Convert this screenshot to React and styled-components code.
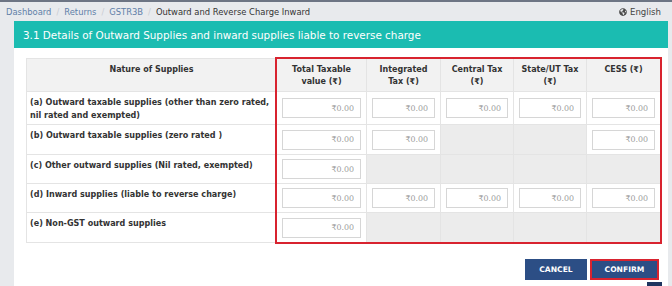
import React from "react";
import styled, { createGlobalStyle } from "styled-components";
import { FaGlobeAmericas } from "react-icons/fa";

const GlobalStyle = createGlobalStyle`
  body {
    margin: 0;
    background: #e8eaed;
    font-family: "DejaVu Sans", Verdana, sans-serif;
    color: #333;
    overflow: hidden;
  }
`;

const TopBar = styled.div`
  border-top: 2px solid #6d7584;
  height: 19px;
  display: flex;
  align-items: center;
  justify-content: space-between;
  padding: 0 11px 0 6px;
  font-size: 8.4px;
`;

const Crumbs = styled.div`
  display: flex;
  align-items: center;
`;

const Crumb = styled.span`
  color: ${(p) => (p.$current ? "#333" : "#5f7fa8")};
`;

const Sep = styled.span`
  color: #c9ccd2;
  margin: 0 5px;
`;

const Lang = styled.div`
  display: flex;
  align-items: center;
  gap: 3px;
  color: #444;
  font-size: 8.6px;
  svg {
    width: 8px;
    height: 8px;
    color: #4a4a4a;
  }
`;

const Main = styled.div`
  padding: 0 4px 0 14px;
`;

const TitleBar = styled.div`
  background: #1bbcb1;
  color: #fff;
  height: 27px;
  line-height: 28px;
  padding-left: 9px;
  font-size: 10.4px;
`;

const Panel = styled.div`
  background: #fff;
  padding: 10px 8px 30px 12px;
`;

const Table = styled.div`
  display: grid;
  grid-template-columns: 250px 90px 74px 73px 73px 74px;
  width: 634px;
  border-top: 1px solid #e4e4e4;
  border-left: 1px solid #e4e4e4;
  box-sizing: border-box;
`;

const Cell = styled.div`
  grid-row: ${(p) => p.$row};
  grid-column: ${(p) => p.$col};
  border-right: 1px solid #e4e4e4;
  border-bottom: 1px solid #e4e4e4;
  box-sizing: border-box;
`;

const HeadCell = styled(Cell)`
  background: #f2f2f2;
  padding: 5px 6px 4px;
  height: 33px;
  font-size: 8px;
  font-weight: bold;
  line-height: 12px;
  text-align: center;
  color: #333;
`;

const TextCell = styled(Cell)`
  padding: 4px 4px 3px 3px;
  font-size: 8.05px;
  font-weight: bold;
  line-height: 13px;
  color: #333;
  height: ${(p) => p.$h}px;
`;

const InputCell = styled(Cell)`
  background: ${(p) => (p.$off ? "#ececec" : "#fff")};
  padding: 0 5px;
  display: flex;
  align-items: center;
  height: ${(p) => p.$h}px;
`;

const Amount = styled.input`
  width: 100%;
  height: 20px;
  box-sizing: border-box;
  border: 1px solid #d6d6d6;
  background: #fff;
  text-align: right;
  padding: 0 6px;
  font-family: "DejaVu Sans", Verdana, sans-serif;
  font-size: 7.9px;
  color: #333;
  outline: none;
  &::placeholder {
    color: #9a9a9a;
  }
`;

const Highlight = styled.div`
  grid-column: 2 / 7;
  grid-row: 1 / 7;
  margin: -2px -1px -1px -2px;
  border: 2px solid #d8232f;
  pointer-events: none;
  z-index: 1;
`;

const Actions = styled.div`
  display: flex;
  justify-content: flex-end;
  gap: 3px;
  width: 634px;
  margin-top: 16px;
  padding-right: 1px;
  box-sizing: border-box;
`;

const Button = styled.button`
  height: 21px;
  width: ${(p) => p.$w}px;
  background: #2c4e85;
  color: #fff;
  border: ${(p) => (p.$marked ? "2px solid #d8232f" : "none")};
  font-family: "DejaVu Sans", Verdana, sans-serif;
  font-weight: bold;
  font-size: 7.6px;
  padding: 0;
  box-sizing: border-box;
`;

const ScrollTop = styled.div`
  position: fixed;
  top: 282px;
  right: 10px;
  width: 15px;
  height: 20px;
  background: #1f3560;
`;

const headers = [
  "Nature of Supplies",
  "Total Taxable value (₹)",
  "Integrated Tax (₹)",
  "Central Tax (₹)",
  "State/UT Tax (₹)",
  "CESS (₹)",
];

const rows = [
  { label: "(a) Outward taxable supplies (other than zero rated, nil rated and exempted)", h: 33, on: [1, 1, 1, 1, 1] },
  { label: "(b) Outward taxable supplies (zero rated )", h: 30, on: [1, 1, 0, 0, 1] },
  { label: "(c) Other outward supplies (Nil rated, exempted)", h: 29, on: [1, 0, 0, 0, 0] },
  { label: "(d) Inward supplies (liable to reverse charge)", h: 29, on: [1, 1, 1, 1, 1] },
  { label: "(e) Non-GST outward supplies", h: 30, on: [1, 0, 0, 0, 0] },
];

export default function App() {
  return (
    <>
      <GlobalStyle />
      <TopBar>
        <Crumbs>
          <Crumb>Dashboard</Crumb>
          <Sep>/</Sep>
          <Crumb>Returns</Crumb>
          <Sep>/</Sep>
          <Crumb>GSTR3B</Crumb>
          <Sep>/</Sep>
          <Crumb $current>Outward and Reverse Charge Inward</Crumb>
        </Crumbs>
        <Lang>
          <FaGlobeAmericas />
          English
        </Lang>
      </TopBar>
      <Main>
        <TitleBar>3.1 Details of Outward Supplies and inward supplies liable to reverse charge</TitleBar>
        <Panel>
          <Table>
            {headers.map((h, i) => (
              <HeadCell key={h} $row={1} $col={i + 1}>
                {h}
              </HeadCell>
            ))}
            {rows.map((r, ri) => (
              <React.Fragment key={r.label}>
                <TextCell $row={ri + 2} $col={1} $h={r.h}>
                  {r.label}
                </TextCell>
                {r.on.map((on, i) => (
                  <InputCell key={i} $row={ri + 2} $col={i + 2} $h={r.h} $off={!on}>
                    {on ? <Amount placeholder="₹0.00" /> : null}
                  </InputCell>
                ))}
              </React.Fragment>
            ))}
            <Highlight />
          </Table>
          <Actions>
            <Button $w={62}>CANCEL</Button>
            <Button $w={69} $marked>CONFIRM</Button>
          </Actions>
        </Panel>
      </Main>
      <ScrollTop />
    </>
  );
}
